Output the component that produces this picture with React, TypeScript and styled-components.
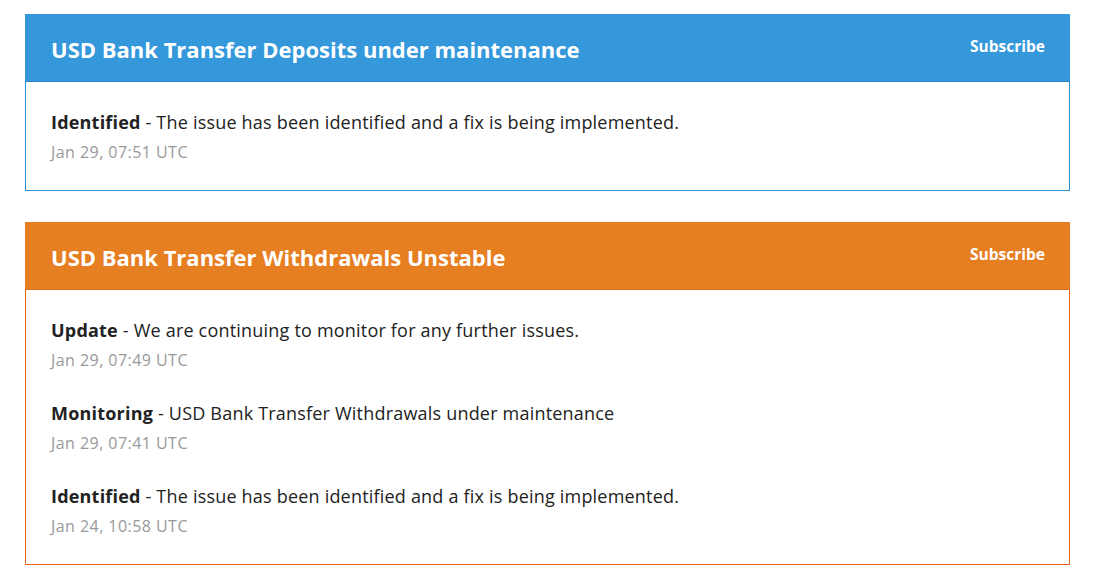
import { FC } from 'react';
import styled, { createGlobalStyle } from 'styled-components';

const GlobalStyle = createGlobalStyle`
    html, body {
        margin: 0;
        padding: 0;
        background: #ffffff;
    }
    body {
        font-family: "Open Sans", "Noto Sans", "Liberation Sans", sans-serif;
        color: #222222;
    }
`;

type Tone = 'blue' | 'orange';

const palette: Record<Tone, { bg: string; border: string; edge: string }> = {
    blue: { bg: '#3498db', border: '#2f8fd6', edge: '#2a85cc' },
    orange: { bg: '#e67e22', border: '#e8641c', edge: '#d9701a' },
};

const Page = styled.div`
    display: flex;
    flex-direction: column;
    gap: 31px;
    padding: 14px 30px 20px 25px;
`;

const Card = styled.div<{ $tone: Tone }>`
    border: 1px solid ${p => palette[p.$tone].border};
    border-top: none;
    background: #ffffff;
`;

const Header = styled.div<{ $tone: Tone }>`
    display: flex;
    align-items: center;
    justify-content: space-between;
    height: 67px;
    margin: 0 -1px;
    padding: 0 25px 0 26px;
    background: ${p => palette[p.$tone].bg};
    border-bottom: 1px solid ${p => palette[p.$tone].edge};
`;

const Title = styled.h2`
    margin: 0;
    padding-top: 3px;
    font-size: 22px;
    font-weight: 700;
    color: #ffffff;
`;

const Subscribe = styled.a`
    margin-top: -3px;
    font-size: 15.5px;
    font-weight: 700;
    color: #ffffff;
    cursor: pointer;
`;

const Body = styled.div`
    display: flex;
    flex-direction: column;
    gap: 29px;
    padding: 27px 25px;
`;

const Update = styled.div`
    display: flex;
    flex-direction: column;
    gap: 6px;
`;

const Message = styled.div`
    font-size: 18px;
    line-height: 26px;
    letter-spacing: 0.2px;
    color: #222222;
    strong {
        font-weight: 700;
    }
`;

const Stamp = styled.div`
    font-size: 16px;
    line-height: 22px;
    letter-spacing: 0.45px;
    color: #999999;
`;

interface IUpdate {
    status: string;
    text: string;
    time: string;
}

interface IIncident {
    title: string;
    tone: Tone;
    updates: IUpdate[];
}

const incidents: IIncident[] = [
    {
        title: 'USD Bank Transfer Deposits under maintenance',
        tone: 'blue',
        updates: [
            { status: 'Identified', text: 'The issue has been identified and a fix is being implemented.', time: 'Jan 29, 07:51 UTC' },
        ],
    },
    {
        title: 'USD Bank Transfer Withdrawals Unstable',
        tone: 'orange',
        updates: [
            { status: 'Update', text: 'We are continuing to monitor for any further issues.', time: 'Jan 29, 07:49 UTC' },
            { status: 'Monitoring', text: 'USD Bank Transfer Withdrawals under maintenance', time: 'Jan 29, 07:41 UTC' },
            { status: 'Identified', text: 'The issue has been identified and a fix is being implemented.', time: 'Jan 24, 10:58 UTC' },
        ],
    },
];

const App: FC = () => (
    <>
        <GlobalStyle />
        <Page>
            {incidents.map(incident => (
                <Card key={incident.title} $tone={incident.tone}>
                    <Header $tone={incident.tone}>
                        <Title>{incident.title}</Title>
                        <Subscribe>Subscribe</Subscribe>
                    </Header>
                    <Body>
                        {incident.updates.map(update => (
                            <Update key={update.time}>
                                <Message>
                                    <strong>{update.status}</strong> - {update.text}
                                </Message>
                                <Stamp>{update.time}</Stamp>
                            </Update>
                        ))}
                    </Body>
                </Card>
            ))}
        </Page>
    </>
);

export default App;
